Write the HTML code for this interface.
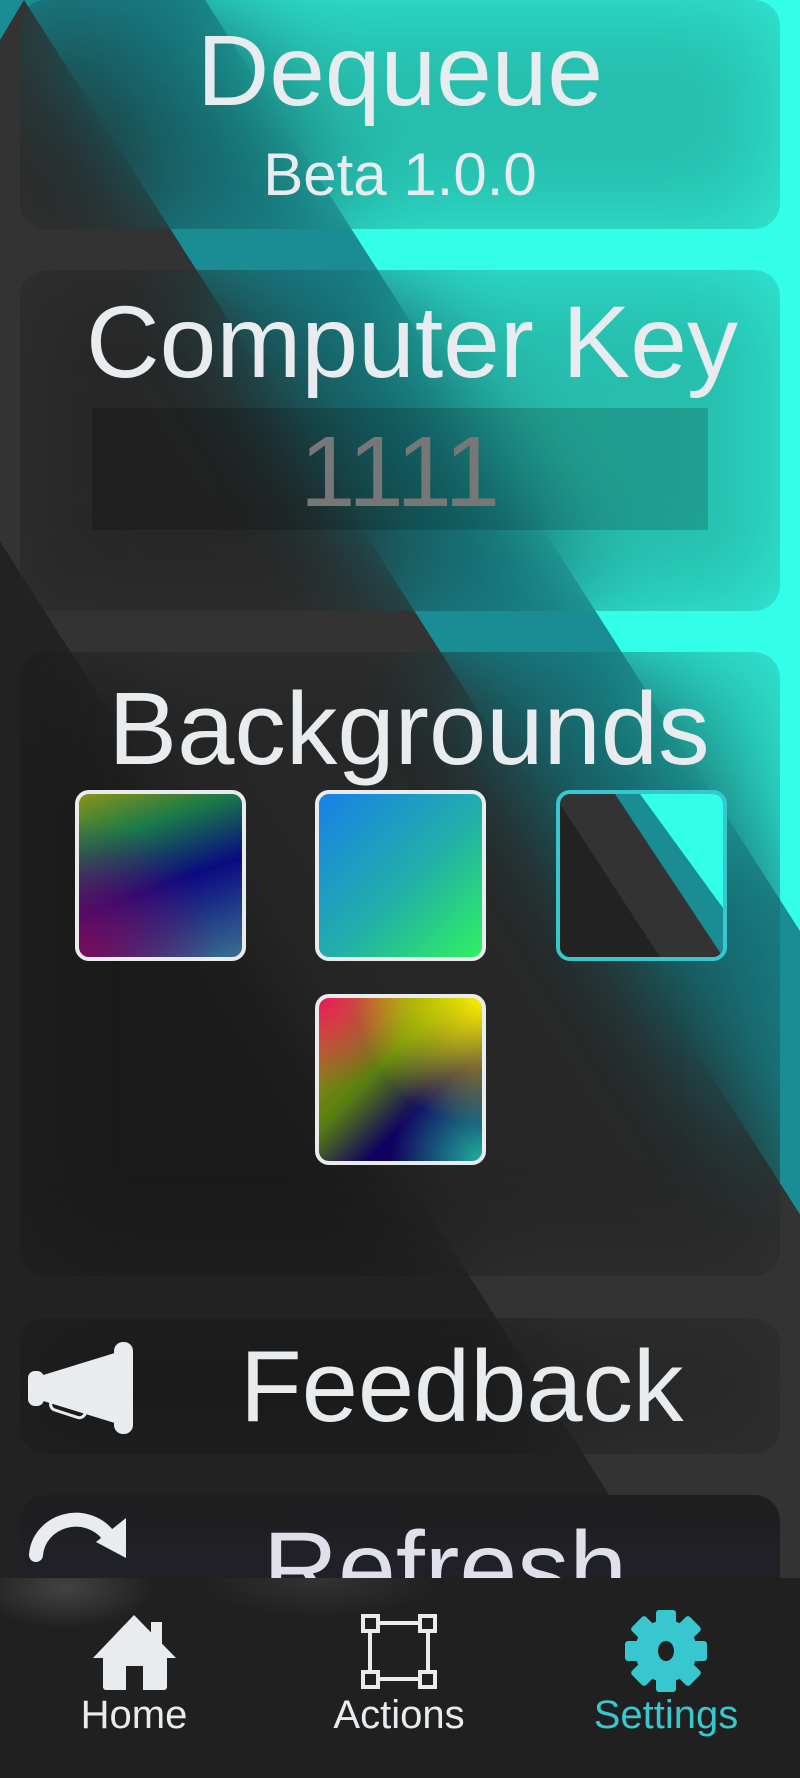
<!DOCTYPE html>
<html><head><meta charset="utf-8"><style>
*{margin:0;padding:0;box-sizing:border-box}
body{width:800px;height:1778px;overflow:hidden;position:relative;background:#222;font-family:"Liberation Sans",sans-serif;color:#e8ecee}
#bg{position:absolute;left:0;top:0}
.card{position:absolute;left:20px;width:760px;border-radius:26px;overflow:hidden;backdrop-filter:blur(50px) brightness(0.8);-webkit-backdrop-filter:blur(50px) brightness(0.8);background:rgba(30,30,30,0.08)}
.t{position:absolute;left:0;width:100%;text-align:center;white-space:nowrap}
.sw{position:absolute;width:171px;height:171px;border:4px solid #e8ecee;border-radius:14px;overflow:hidden}
.nav{position:absolute;left:0;top:1578px;width:800px;height:200px;background:radial-gradient(ellipse 90px 40px at 65px 10px,rgba(90,90,90,0.6),transparent),radial-gradient(ellipse 120px 40px at 320px 0px,rgba(80,80,80,0.4),transparent),#202020}
.nl{position:absolute;top:1693px;font-size:40px;text-align:center;width:200px}
</style></head><body>
<svg id="bg" width="800" height="1778">
<rect width="800" height="1778" fill="#222"/>
<polygon points="-346,0 24,0 1160,1778 790,1778" fill="#333"/>
<polygon points="24,0 205,0 1341,1778 1160,1778" fill="#1a8c94"/>
<polygon points="205,0 900,0 900,1778 1341,1778" fill="#33ffe8"/>
<polygon points="-30,0 24,0 0,40 -30,40" fill="#1a8c94"/>
</svg>

<div class="card" style="top:0;height:229px">
<div class="t" style="top:14px;font-size:100px">Dequeue</div>
<div class="t" style="top:140px;font-size:60px;font-weight:300">Beta 1.0.0</div>
</div>

<div class="card" style="top:270px;height:341px">
<div class="t" style="top:14px;font-size:102px;left:12px">Computer Key</div>
<div style="position:absolute;left:72px;top:138px;width:616px;height:122px;background:rgba(0,0,0,0.17)"></div>
<div class="t" style="top:145px;font-size:100px;color:#777">1111</div>
</div>

<div class="card" style="top:652px;height:624px">
<div class="t" style="top:18px;font-size:103px;left:9px">Backgrounds</div>
<div class="sw" style="left:55px;top:138px;background:radial-gradient(circle at 0 100%,#7a0a5a,transparent 60%),linear-gradient(160deg,#8a9418 0%,#1a7a48 25%,#0a0a80 55%,#3a7090 100%)"></div>
<div class="sw" style="left:295px;top:138px;background:linear-gradient(135deg,#1880e8,#22b0a8 55%,#30f060)"></div>
<div class="sw" style="left:536px;top:138px;border-color:#38c6cf;background:#333"><svg width="163" height="163" style="display:block"><polygon points="0,10 0,163 100,163" fill="#222"/><polygon points="55,0 163,0 163,163" fill="#1a8c94"/><polygon points="80,0 163,0 163,114" fill="#33ffe8"/></svg></div>
<div class="sw" style="left:295px;top:342px;background:radial-gradient(circle at 100% 0,#fff000,transparent 55%),radial-gradient(circle at 0 0,#e8185a,transparent 40%),radial-gradient(circle at 100% 100%,#20b0a0,transparent 40%),linear-gradient(135deg,#c09020 0%,#5a8010 40%,#100060 65%,#10004a 100%)"></div>
</div>

<div class="card" style="top:1318px;height:136px">
<div class="t" style="top:12px;font-size:101px;left:0;text-align:left;padding-left:220px">Feedback</div>
<svg style="position:absolute;left:0;top:0" width="120" height="136"><g fill="#e8ecee" transform="translate(-20,-1318)">
<rect x="114" y="1342" width="19" height="92" rx="9"/>
<rect x="28" y="1371" width="16" height="35" rx="7"/>
<polygon points="40,1376 118,1352 118,1424 40,1400"/>
<rect x="50" y="1402" width="36" height="12" rx="6" transform="rotate(18 68 1408)" fill="none" stroke="#e8ecee" stroke-width="3"/>
</g></svg>
</div>

<div class="card" style="top:1495px;height:200px;background:linear-gradient(#1e1e1e,#24243a)">
<div class="t" style="top:15px;font-size:104px;left:45px;color:#dfe0ea">Refresh</div>
<svg style="position:absolute;left:0;top:0" width="120" height="100"><g transform="translate(-20,-1495)" fill="#e8ecee">
<path d="M36,1555 A40,38 0 0 1 108,1535" stroke="#e8ecee" stroke-width="14" fill="none" stroke-linecap="round"/>
<polygon points="126,1518 126,1558 96,1542"/>
</g></svg>
</div>

<div class="nav"></div>
<svg style="position:absolute;left:0;top:1578px" width="800" height="120">
<g fill="#e8ecee">
<polygon points="93,80 134,37 176,80"/>
<rect x="103" y="70" width="64" height="42" rx="3"/>
<rect x="151" y="44" width="11" height="25"/>
<rect x="126" y="88" width="17" height="24" fill="#202020"/>
</g>
<g fill="none" stroke="#e8ecee" stroke-width="4">
<rect x="370" y="45" width="58" height="56"/>
<rect x="363" y="38" width="15" height="15" fill="#202020"/>
<rect x="420" y="38" width="15" height="15" fill="#202020"/>
<rect x="363" y="94" width="15" height="15" fill="#202020"/>
<rect x="420" y="94" width="15" height="15" fill="#202020"/>
</g>
<g fill="#38c6cf" transform="translate(666,73)">
<circle r="31"/>
<g id="tt"><rect x="-10" y="-41" width="20" height="18" rx="3"/></g>
<use href="#tt" transform="rotate(45)"/><use href="#tt" transform="rotate(90)"/><use href="#tt" transform="rotate(135)"/><use href="#tt" transform="rotate(180)"/><use href="#tt" transform="rotate(225)"/><use href="#tt" transform="rotate(270)"/><use href="#tt" transform="rotate(315)"/>
<ellipse rx="8" ry="10" fill="#202020"/>
</g>
</svg>
<div class="nl" style="left:34px">Home</div>
<div class="nl" style="left:299px">Actions</div>
<div class="nl" style="left:566px;color:#38c6cf">Settings</div>
</body></html>
